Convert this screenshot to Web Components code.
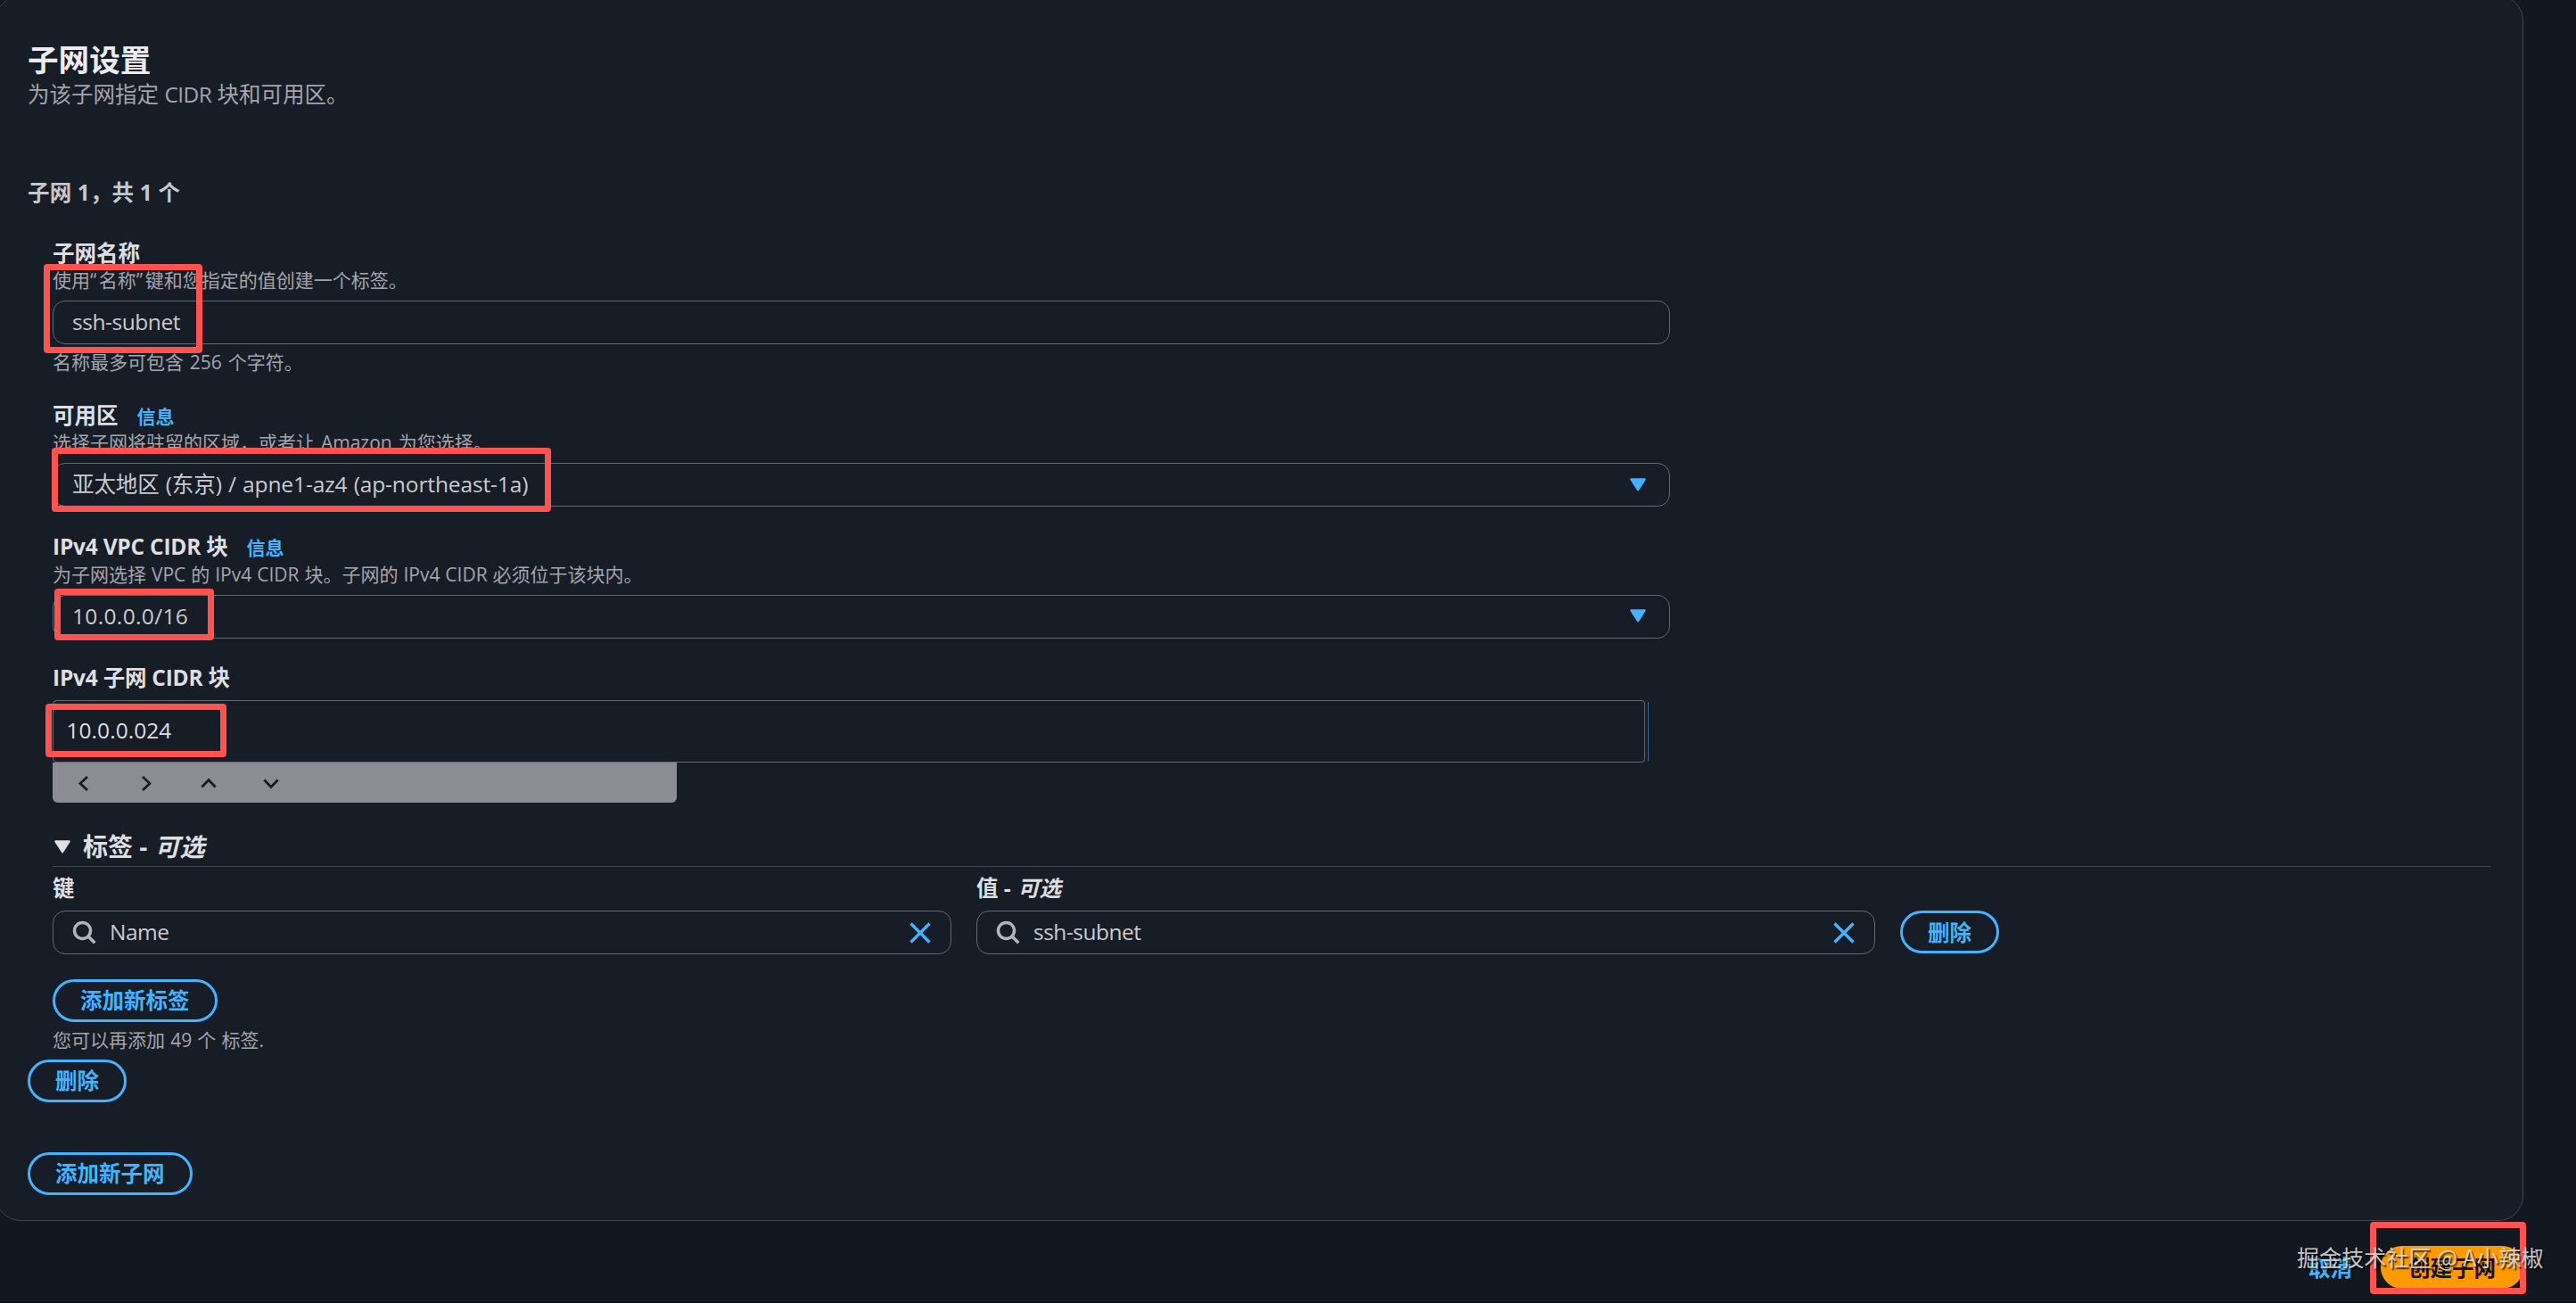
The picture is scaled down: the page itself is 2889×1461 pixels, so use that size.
<!DOCTYPE html>
<html lang="zh-CN">
<head>
<meta charset="utf-8">
<title>创建子网</title>
<style>
html,body{margin:0;height:1461px;overflow:hidden;background:#12181f}
body{font-family:"Open Sans","Noto Sans CJK SC",sans-serif;font-size:24.5px;line-height:35px;color:#cacad1;position:relative}
</style>
</head>
<body>
<subnet-page></subnet-page>
<script>
const define=(name,html,setup)=>customElements.define(name,class extends HTMLElement{
  constructor(){
    super();
    const t=document.createElement('template');
    t.innerHTML=html;
    this.attachShadow({mode:'open'}).append(t.content.cloneNode(true));
  }
  connectedCallback(){ if(setup) setup(this,this.shadowRoot); }
});

/* outlined or filled pill button */
define('pill-button',`<style>
:host{display:inline-flex;box-sizing:border-box;height:48px;align-items:center;justify-content:center;padding:0 28px;border:3px solid #42b4ff;border-radius:35px;color:#42b4ff;font-weight:700;white-space:nowrap;flex:none}
:host([primary]){background:#ff9900;border-color:#ff9900;color:#0f141a}
</style><slot></slot>`);

/* label, optional info link, description, control and constraint */
define('form-field',`<style>
:host{display:flex;flex-direction:column}
.label{display:flex;height:35px;line-height:34px;font-weight:700;color:#dedee3;white-space:pre}
.desc,.hint{font-size:21px;line-height:27px;height:28px;color:#a4a4ad;white-space:pre}
.desc{margin-top:-.5px}
.control{display:flex;margin-top:var(--control-gap,8px)}
.hint{margin-top:7px}
[hidden]{display:none}
::slotted(info-link){margin-left:21px}
</style>
<div class="label"><slot name="label"></slot><slot name="info"></slot></div>
<div class="desc"><slot name="desc"></slot></div>
<div class="control"><slot></slot></div>
<div class="hint"><slot name="hint"></slot></div>`,(el,r)=>{
  for(const n of['desc','hint']) r.querySelector('.'+n).hidden=!el.querySelector(`[slot=${n}]`);
});
define('info-link',`<style>:host{display:block;font-size:21px;font-weight:700;color:#42b4ff;line-height:36px}</style><slot></slot>`);

/* single-line rounded input */
define('text-input',`<style>
:host{display:flex;flex:1;box-sizing:border-box;height:49px;border:1px solid #656871;border-radius:14px;align-items:center;padding:0 26px 0 21px}
.v{flex:1;white-space:pre;padding-bottom:2px}
</style><div class="v"><slot></slot></div><slot name="end"></slot>`);
define('caret-icon',`<style>:host{display:block;height:16px;white-space:normal}svg{display:block}</style>
<svg width="18" height="16" viewBox="0 0 18 16"><path d="M1.4 1.4H16.6L9 13.2Z" fill="currentColor" stroke="currentColor" stroke-width="2.4" stroke-linejoin="round"/></svg>`);

/* search box with magnifier and clear button */
define('search-input',`<style>
:host{display:flex;width:1008px;box-sizing:border-box;height:49px;border:1px solid #656871;border-radius:14px;align-items:center;padding:0 22px 0 20.5px}
svg{flex:none;display:block}.v{flex:1;margin-left:15.5px;letter-spacing:-.5px;padding-bottom:2px}
</style>
<svg width="27" height="27" viewBox="0 0 27 27" fill="none" stroke="#b4b4bb" stroke-width="3.5"><circle cx="11.5" cy="11.5" r="9"/><path d="M17.8 17.8L25.3 25.3"/></svg>
<div class="v"><slot></slot></div>
<svg width="24" height="24" viewBox="0 0 24 24" fill="none" stroke="#42b4ff" stroke-width="3.3"><path d="M1.5 1.5L22.5 22.5M22.5 1.5L1.5 22.5"/></svg>`);

/* address box with stepping toolbar */
define('cidr-input',`<style>
:host{display:block}
.row{display:flex;gap:3px}
.box{box-sizing:border-box;width:1786px;height:70px;border:1px solid #656871;border-radius:4px;padding-left:14.5px;line-height:66px;color:#dedee3;letter-spacing:.05px}
.edge{width:1px;height:66px;margin-top:2px;background:#33688d}
.bar{width:700px;height:45px;background:#8c8c94;border-radius:0 0 6px 6px;display:flex;align-items:center}
.bar svg{width:70px;height:45px;flex:none}
</style>
<div class="row"><div class="box"><slot></slot></div><div class="edge"></div></div>
<div class="bar">${['M4 -7.6L-4 0L4 7.6','M-4 -7.6L4 0L-4 7.6','M-7.6 4L0 -4L7.6 4','M-7.6 -4L0 4L7.6 -4'].map(d=>`<svg viewBox="-35 -23.5 70 45" fill="none" stroke="#161d26" stroke-width="2.8"><path d="${d}"/></svg>`).join('')}</div>`);

/* collapsible tag editor */
define('tag-section',`<style>
:host{display:block}
.head{display:flex;align-items:center;height:42px;padding-left:2px;border-bottom:1px solid #424650;font-size:28px;font-weight:700;color:#dedee3;width:2732px}
caret-icon{margin-right:14px}
.head span{white-space:pre;padding-bottom:1px}
i{margin-left:1px}
.cols{display:flex;gap:28px;align-items:flex-end;margin-top:6.5px}
.cols pill-button{margin-bottom:1px}
form-field{width:1008px;--control-gap:7.5px}
.add{display:flex;margin-top:27.5px}
.note{font-size:21px;line-height:28px;margin-top:6px;color:#a4a4ad;word-spacing:.7px}
</style>
<div class="head"><caret-icon></caret-icon><span>标签 - <i>可选</i></span></div>
<div class="cols">
<form-field><span slot="label">键</span><search-input>Name</search-input></form-field>
<form-field><span slot="label">值 - <i>可选</i></span><search-input>ssh-subnet</search-input></form-field>
<pill-button>删除</pill-button></div>
<div class="add"><pill-button>添加新标签</pill-button></div>
<div class="note">您可以再添加 49 个 标签.</div>`);

define('subnet-panel',`<style>
:host{display:block;box-sizing:border-box;margin:-5px 0 0 -5px;width:2835px;height:1374px;background:#161d26;border:1px solid #424650;border-radius:28px;padding:49px 0 0 35px}
h2{margin:0;font-size:34.6px;line-height:43px;color:#ebebf0}
.sub{line-height:35px;color:#a4a4ad}
h3{margin:75px 0 0;font-size:24.5px;line-height:35px;color:#c6c6cd;letter-spacing:.15px}
.fields{margin:33.5px 0 0 28px}
.w{width:1814px}
.f2{margin-top:27.5px}.f3{margin-top:28px}.f4{margin-top:27.5px;--control-gap:7px}
caret-icon{color:#42b4ff}
tag-section{margin-top:29px}
.del{display:flex;margin-top:8px}.new{display:flex;margin-top:56px}
.tight{letter-spacing:-.45px}.lab{letter-spacing:-.23px}.q{letter-spacing:2.5px}
.cidr{letter-spacing:-.6px}
.az{word-spacing:1px;letter-spacing:-.12px}.ip{letter-spacing:.35px}
.s1{word-spacing:1.4px}.s2{word-spacing:1.5px}.s3{word-spacing:.5px}
</style>
<h2>子网设置</h2>
<div class="sub">为该子网指定 <span class="cidr">CIDR</span> 块和可用区。</div>
<h3>子网 1，共 1 个</h3>
<div class="fields">
<form-field class="w"><span slot="label">子网名称</span><span slot="desc">使用<span class="q">“</span>名称<span class="q">”</span>键和您指定的值创建一个标签。</span><text-input class="tight">ssh-subnet</text-input><span slot="hint" class="s1">名称最多可包含 256 个字符。</span></form-field>
<form-field class="w f2"><span slot="label">可用区</span><info-link slot="info">信息</info-link><span slot="desc" class="s2">选择子网将驻留的区域，或者让 Amazon 为您选择。</span><text-input class="az">亚太地区 (东京) / apne1-az4 (ap-northeast-1a)<caret-icon slot="end"></caret-icon></text-input></form-field>
<form-field class="w f3"><span slot="label" class="lab">IPv4 VPC CIDR 块</span><info-link slot="info">信息</info-link><span slot="desc" class="s3">为子网选择 VPC 的 IPv4 CIDR 块。子网的 IPv4 CIDR 必须位于该块内。</span><text-input class="ip">10.0.0.0/16<caret-icon slot="end"></caret-icon></text-input></form-field>
<form-field class="f4"><span slot="label" class="lab">IPv4 子网 CIDR 块</span><cidr-input>10.0.0.024</cidr-input></form-field>
<tag-section></tag-section>
</div>
<div class="del"><pill-button>删除</pill-button></div>
<div class="new"><pill-button>添加新子网</pill-button></div>`);

define('page-actions',`<style>
:host{display:flex;justify-content:flex-end;align-items:center;width:2830px;height:48px;margin-top:28px;gap:32px}
.cancel{color:#42b4ff;font-weight:700}
</style><span class="cancel">取消</span><pill-button primary>创建子网</pill-button>`);

/* red annotation frame drawn over the form */
define('mark-frame',`<style>:host{position:absolute;box-sizing:border-box;border:7px solid #fc5351;border-radius:4px}</style>`,el=>{
  const[x,y,w,h]=el.getAttribute('rect').split(' ');
  Object.assign(el.style,{left:x+'px',top:y+'px',width:w+'px',height:h+'px'});
});
define('water-mark',`<style>:host{position:absolute;left:2576px;top:1391.5px;font-family:"Noto Sans CJK SC",sans-serif;font-size:25px;letter-spacing:.12px;line-height:35px;color:rgba(225,225,225,.88);text-shadow:1.5px 1.5px 1.5px rgba(0,0,0,.75);white-space:pre}</style><slot></slot>`);

define('subnet-page',`<style>:host{display:flow-root;height:1460px;border-bottom:1px solid #05070a;overflow:hidden}</style>
<subnet-panel></subnet-panel>
<page-actions></page-actions>
<mark-frame rect="49 296 178 100"></mark-frame>
<mark-frame rect="58 502 560 72"></mark-frame>
<mark-frame rect="61 660 179 58"></mark-frame>
<mark-frame rect="51 789 203 60"></mark-frame>
<mark-frame rect="2658 1370 175 81"></mark-frame>
<water-mark>掘金技术社区 @ A小辣椒</water-mark>`);
</script>
</body>
</html>
